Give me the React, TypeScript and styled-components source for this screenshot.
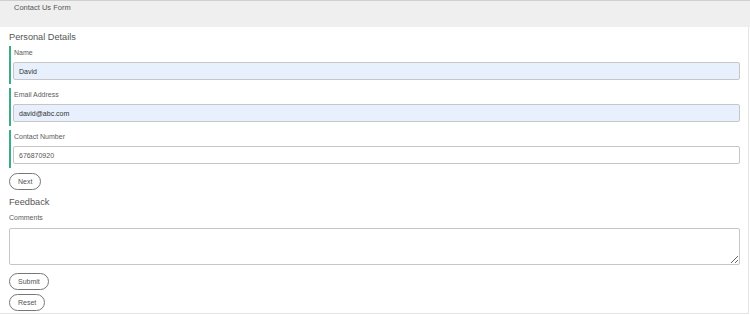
import styled, { createGlobalStyle } from 'styled-components'

const GlobalStyle = createGlobalStyle`
    html, body {
        margin: 0;
        padding: 0;
        background: #ffffff;
    }
    body {
        font-family: "Liberation Sans", Arial, sans-serif;
    }
    * {
        box-sizing: border-box;
    }
`

const Page = styled.div`
    width: 750px;
    border-top: 1px solid #cfcfcf;
`

const Header = styled.div`
    height: 26px;
    background-color: #efefef;
    padding: 1px 0 0 14px;
    font-size: 7.5px;
    line-height: 12px;
    color: #555;
`

const Main = styled.form`
    width: 749px;
    border-right: 1px solid #e4e4e4;
    border-bottom: 1px solid #e4e4e4;
    padding: 4px 8px 2px 9px;
    display: flex;
    flex-direction: column;
    align-items: flex-start;
`

const SectionTitle = styled.div<{ $top?: number }>`
    font-size: 9.2px;
    line-height: 12px;
    color: #555;
    margin-top: ${(p) => p.$top ?? 0}px;
`

const Groups = styled.div`
    display: flex;
    flex-direction: column;
    gap: 4px;
    width: 100%;
    margin-top: 3px;
`

const Group = styled.div`
    height: 38px;
    border-left: 2px solid #3aad86;
    padding: 0 0 0 2px;
`

const Label = styled.label<{ $plain?: boolean }>`
    display: block;
    font-size: 7px;
    line-height: ${(p) => (p.$plain ? 11 : 14)}px;
    height: ${(p) => (p.$plain ? 11 : 14)}px;
    color: #5c5c5c;
    padding-left: ${(p) => (p.$plain ? 0 : 1)}px;
    margin: ${(p) => (p.$plain ? '4px 0 0' : '0 0 2px')};
`

const Input = styled.input<{ $filled?: boolean }>`
    display: block;
    width: 100%;
    height: 18px;
    border: 1px solid #c6c6c6;
    border-radius: 2px;
    background-color: ${(p) => (p.$filled ? '#e8f0fe' : '#ffffff')};
    padding: 0 5px;
    font-family: "Liberation Sans", Arial, sans-serif;
    font-size: 7px;
    color: ${(p) => (p.$filled ? '#333' : '#555')};
    outline: none;
`

const Comments = styled.textarea`
    display: block;
    width: 100%;
    height: 37px;
    margin-top: 5px;
    border: 1px solid #c6c6c6;
    border-radius: 2px;
    background: #fff;
    font-family: "Liberation Sans", Arial, sans-serif;
    font-size: 7px;
    outline: none;
`

const PillButton = styled.button<{ $top: number }>`
    height: 17px;
    margin-top: ${(p) => p.$top}px;
    padding: 0 8px;
    border: 1px solid #777;
    border-radius: 9px;
    background: #fff;
    font-family: "Liberation Sans", Arial, sans-serif;
    font-size: 7px;
    line-height: 15px;
    color: #555;
    cursor: pointer;
`

const fields = [
    { label: 'Name', value: 'David', filled: true },
    { label: 'Email Address', value: 'david@abc.com', filled: true },
    { label: 'Contact Number', value: '676870920', filled: false },
]

function App() {
    return (
        <>
            <GlobalStyle />
            <Page>
                <Header>Contact Us Form</Header>
                <Main onSubmit={(e) => e.preventDefault()}>
                    <SectionTitle>Personal Details</SectionTitle>
                    <Groups>
                        {fields.map((f) => (
                            <Group key={f.label}>
                                <Label>{f.label}</Label>
                                <Input $filled={f.filled} defaultValue={f.value} />
                            </Group>
                        ))}
                    </Groups>
                    <PillButton type="button" $top={5}>Next</PillButton>
                    <SectionTitle $top={6}>Feedback</SectionTitle>
                    <Label $plain>Comments</Label>
                    <Comments />
                    <PillButton type="submit" $top={8}>Submit</PillButton>
                    <PillButton type="reset" $top={4}>Reset</PillButton>
                </Main>
            </Page>
        </>
    )
}

export default App
